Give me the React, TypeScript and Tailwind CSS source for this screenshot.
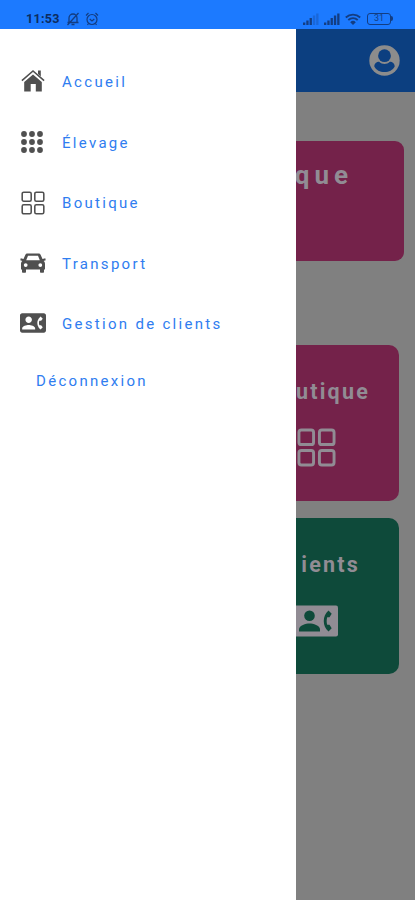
import React from 'react';
import { MdContactPhone } from 'react-icons/md';

interface MenuItem {
  label: string;
  icon: React.ReactNode;
}

const HomeIcon: React.FC = () => (
  <svg viewBox="0 0 24 24" className="h-6 w-6" fill="currentColor">
    <path d="M3.200 13 12 5.400 20.800 13v9.500h-6V15H9.700v7.500H3.200z" />
    <path d="M17 1.500h2.800v6L17 5z" />
    <path d="M.9 11.700 12 2l11.100 9.700" fill="none" stroke="currentColor" strokeWidth="1.600" />
    <path d="M2 12.900 12 4.100l10 8.800" fill="none" stroke="#ffffff" strokeWidth=".7" />
  </svg>
);

const DotsIcon: React.FC = () => (
  <svg viewBox="0 0 22 22" className="mr-[2px] h-[22px] w-[22px]" fill="currentColor">
    {[3, 11, 19].map((cy) =>
      [3, 11, 19].map((cx) => <circle key={`${cx}-${cy}`} cx={cx} cy={cy} r="2.9" />)
    )}
  </svg>
);

const GridIcon: React.FC<{ className: string; strokeWidth: number }> = ({ className, strokeWidth }) => (
  <svg viewBox="0 0 40 40" className={className} fill="none" stroke="currentColor" strokeWidth={strokeWidth}>
    <rect x="2" y="2" width="15" height="15" rx="2.500" />
    <rect x="23" y="2" width="15" height="15" rx="2.500" />
    <rect x="2" y="23" width="15" height="15" rx="2.500" />
    <rect x="23" y="23" width="15" height="15" rx="2.500" />
  </svg>
);

const CarIcon: React.FC = () => (
  <svg viewBox="0 0 26 20" className="h-5 w-[26px]" fill="currentColor" fillRule="evenodd">
    <path d="M7.500.5h11c1 0 1.700.4 2.100 1.300L22.500 6l2.800-.7.400 1.900-2.100.8c1 .8 1.400 1.700 1.400 3v5.500h-1V19q0 .8-.8.8h-2.400q-.8 0-.8-.8v-2.500H6V19q0 .8-.8.8H2.800Q2 19.800 2 19v-2.500H1V11c0-1.300.4-2.200 1.400-3l-2.100-.8.4-1.900L3.500 6l1.900-4.200C5.800.9 6.500.5 7.500.5zM8 2.700 6.200 7.300h13.600L18 2.700zM5.700 10.200a1.900 1.900 0 1 0 0 3.800 1.900 1.900 0 0 0 0-3.800zm14.600 0a1.900 1.900 0 1 0 0 3.800 1.900 1.900 0 0 0 0-3.800z" />
  </svg>
);

const UserIcon: React.FC = () => (
  <svg viewBox="0 0 31 31" className="h-[31px] w-[31px]">
    <circle cx="15.5" cy="15.5" r="15.2" fill="currentColor" />
    <g fill="#0c3f80">
      <circle cx="15.5" cy="10.7" r="6.4" />
      <path d="M5.3 21.5c0-3 2.2-4.8 4.8-4.8 1.6 1.5 3.4 2.2 5.4 2.2s3.8-.7 5.4-2.2c2.6 0 4.8 1.8 4.8 4.8-1.9 3.6-5.6 5.6-10.2 5.6S7.2 25.100 5.300 21.500z" />
    </g>
  </svg>
);

// Contact card with a person and a handset, its left edge runs under the drawer
const ClientsIcon: React.FC = () => (
  <svg viewBox="0 0 42 32" className="h-8 w-[42px]">
    <path d="M0 .5h40q2 0 2 2v27q0 2-2 2H0z" fill="currentColor" />
    <g fill="#0e4a3a">
      <circle cx="13.500" cy="10.700" r="5.300" />
      <path d="M3 26.500v-2.200c0-3.800 7-5.800 10.500-5.800S24 20.500 24 24.300v2.200z" />
      <path d="m32.500 5.500 3.200 3.300-2.200 3.400h-2.300c-.7 2.500-.7 5.100 0 7.600h2.300l2.200 3.400-3.200 3.300c-6.300-5.300-6.300-15.700 0-21z" />
    </g>
  </svg>
);

const menuItems: MenuItem[] = [
  { label: 'Accueil', icon: <HomeIcon /> },
  { label: 'Élevage', icon: <DotsIcon /> },
  { label: 'Boutique', icon: <GridIcon className="mt-px h-[24px] w-[24px]" strokeWidth={2.6} /> },
  { label: 'Transport', icon: <CarIcon /> },
  { label: 'Gestion de clients', icon: <MdContactPhone className="h-[26px] w-[26px]" /> },
];

const Signal: React.FC<{ weak?: boolean }> = ({ weak }) => (
  <svg viewBox="0 0 16 12" className="h-3 w-4" fill="currentColor">
    <rect x="0" y="9.500" width="2.300" height="2.500" />
    <rect x="3.3" y="7.500" width="2.300" height="4.500" />
    <rect x="6.6" y="5" width="2.300" height="7" />
    <rect x="9.9" y="2.5" width="2.300" height="9.5" opacity={weak ? 0.3 : 1} />
    <rect x="13.2" y="0.500" width="2.300" height="11.500" opacity={weak ? 0.3 : 1} />
  </svg>
);

const StatusBar: React.FC = () => (
  <div className="flex h-[29px] shrink-0 items-center bg-[#1c7aff] pt-2 pl-[26px] text-[#133d82]">
    <span className="w-[40px] pt-px text-[12.5px] font-bold tracking-[0.3px] text-[#0c2c60]">11:53</span>
    <svg viewBox="0 0 14 14" className="h-[14px] w-[14px]" fill="none" stroke="currentColor" strokeWidth="1.3">
      <path d="M3 10.5V6a4 4 0 0 1 8 0v4.5zM1.5 10.5h11M5.5 12.5h3M12.5 1 1.5 13" />
    </svg>
    <svg viewBox="0 0 14 14" className="ml-[5px] h-[14px] w-[14px]" fill="none" stroke="currentColor" strokeWidth="1.2">
      <circle cx="7" cy="7.5" r="5" />
      <path d="M1 3.5 3.5 1M13 3.5 10.5 1M4.7 7 7 9l2.3-2M3.5 11.5 2.5 13M10.5 11.5l1 1.5" />
    </svg>
    <div className="ml-auto flex items-center pr-[22px]">
      <Signal weak />
      <span className="w-[5px]" />
      <Signal />
      <svg viewBox="0 0 16 12" className="ml-[5px] h-3 w-4" fill="none" stroke="currentColor" strokeWidth="1.8">
        <path d="M.8 4.5a10.5 10.5 0 0 1 14.4 0M3.3 7a7 7 0 0 1 9.4 0" />
        <path d="m8 12-2.8-2.8a4 4 0 0 1 5.6 0z" fill="currentColor" stroke="none" />
      </svg>
      <div className="ml-[6px] flex h-[12px] w-[24px] items-center justify-center rounded-[3px] border-[1.5px] border-current text-[9px] leading-none">
        31
      </div>
      <span className="h-[5px] w-[2px] rounded-r bg-current" />
    </div>
  </div>
);

const Drawer: React.FC = () => (
  <nav className="w-[296px] shrink-0 bg-white pt-[22px] text-[15px] text-[#2f7df0]">
    <ul>
      {menuItems.map((item) => (
        <li key={item.label} className="flex h-[60.5px] items-center pl-[19px] tracking-[2.3px]">
          <span className="flex w-[27px] justify-center text-[#505050]">{item.icon}</span>
          <span className="ml-4 pt-[2px] whitespace-nowrap">{item.label}</span>
        </li>
      ))}
    </ul>
    <button className="mt-[17px] ml-9 block leading-5 tracking-[2.3px]">Déconnexion</button>
  </nav>
);

// Part of the home screen left visible, dimmed, beside the drawer
const HomeScreen: React.FC = () => (
  <main className="flex-1 overflow-hidden bg-[#808080] text-[#918c94]">
    <header className="flex h-[63px] items-center justify-end bg-[#0c3f80] pr-[15px] text-[#8c8c8c]">
      <UserIcon />
    </header>
    <section className="mt-[49px] mr-[11px] flex h-[120px] justify-end rounded-r-[9px] bg-[#74224a] pt-[16px] pr-[51px]">
      <h2 className="text-[26px] leading-9 font-bold tracking-[5px]">que</h2>
    </section>
    <section className="mt-[84px] mr-4 h-[156px] rounded-r-[10px] bg-[#74224a] pt-[31px]">
      <h3 className="flex justify-end pr-[29px] text-[21.5px] leading-8 font-bold tracking-[2.2px]">utique</h3>
      <GridIcon className="mt-5 ml-px h-[39px] w-[39px]" strokeWidth={3} />
    </section>
    <section className="mt-[17px] mr-4 h-[156px] rounded-r-[10px] bg-[#0e4a3a] pt-[31px]">
      <h3 className="flex justify-end pr-[39px] text-[21.5px] leading-8 font-bold tracking-[2.2px]">ients</h3>
      <div className="mt-6">
        <ClientsIcon />
      </div>
    </section>
  </main>
);

const App: React.FC = () => {
  return (
    <div className="flex h-[900px] w-[415px] flex-col overflow-hidden font-['Roboto',sans-serif]">
      <StatusBar />
      <div className="flex flex-1">
        <Drawer />
        <HomeScreen />
      </div>
    </div>
  );
};

export default App;
